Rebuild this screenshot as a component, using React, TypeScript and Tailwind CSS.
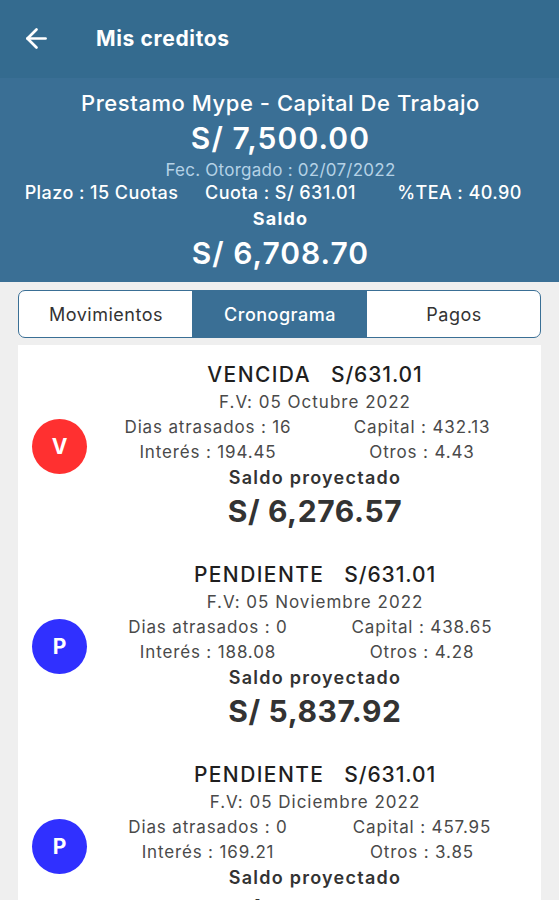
import { ArrowLeft } from "lucide-react";
import { clsx } from "clsx";

type Installment = {
  status: "VENCIDA" | "PENDIENTE";
  amount: string;
  dueDate: string;
  daysLate: string;
  capital: string;
  interest: string;
  others: string;
  balance: string;
};

const installments: Installment[] = [
  {
    status: "VENCIDA",
    amount: "S/631.01",
    dueDate: "05 Octubre 2022",
    daysLate: "16",
    capital: "432.13",
    interest: "194.45",
    others: "4.43",
    balance: "S/ 6,276.57",
  },
  {
    status: "PENDIENTE",
    amount: "S/631.01",
    dueDate: "05 Noviembre 2022",
    daysLate: "0",
    capital: "438.65",
    interest: "188.08",
    others: "4.28",
    balance: "S/ 5,837.92",
  },
  {
    status: "PENDIENTE",
    amount: "S/631.01",
    dueDate: "05 Diciembre 2022",
    daysLate: "0",
    capital: "457.95",
    interest: "169.21",
    others: "3.85",
    balance: "S/ 5,379.97",
  },
];

const tabs = ["Movimientos", "Cronograma", "Pagos"];
const activeTab = "Cronograma";

const Header = () => (
  <header className="flex h-[78px] items-center bg-[#346b8f] pl-[21px] text-white">
    <button type="button" aria-label="Volver" className="-mt-[2px]">
      <ArrowLeft className="h-[31px] w-[31px]" strokeWidth={2.1} />
    </button>
    <h1 className="ml-[44px] text-[21px] font-bold tracking-[0.65px]">
      Mis creditos
    </h1>
  </header>
);

const LoanSummary = () => (
  <section className="flex h-[204px] flex-col bg-[#3a6f95] pt-[10px] pl-[2px] text-center text-white">
    <p className="h-[30px] text-[22px] leading-[30px] font-medium tracking-[0.55px]">
      Prestamo Mype - Capital De Trabajo
    </p>
    <p className="h-[41px] text-[30px] leading-[41px] font-semibold tracking-[1.1px]">
      S/ 7,500.00
    </p>
    <p className="h-[22px] text-[17px] leading-[22px] tracking-[0.25px] text-[#b5d2e6]">
      Fec. Otorgado : 02/07/2022
    </p>
    <div className="grid h-[24px] grid-cols-3 px-[10px] text-[18px] leading-[24px] font-medium tracking-[0.43px] whitespace-nowrap">
      <p>Plazo : 15 Cuotas</p>
      <p>Cuota : S/ 631.01</p>
      <p>%TEA : 40.90</p>
    </div>
    <p className="h-[27px] text-[18px] leading-[27px] font-bold tracking-[1.2px]">
      Saldo
    </p>
    <p className="h-[42px] text-[30px] leading-[42px] font-semibold tracking-[1px]">
      S/ 6,708.70
    </p>
  </section>
);

const Tabs = () => (
  <nav className="mx-[18px] mt-[8px] grid h-[48px] grid-cols-[173px_175px_1fr] overflow-hidden rounded-[7px] border border-[#3a6f95] bg-white">
    {tabs.map((tab) => (
      <button
        key={tab}
        type="button"
        className={clsx(
          "pl-px text-[18px] tracking-[0.5px]",
          tab === activeTab
            ? "bg-[#3a6f95] font-medium text-white"
            : "text-[#333333]"
        )}
      >
        {tab}
      </button>
    ))}
  </nav>
);

const InstallmentRow = ({ item }: { item: Installment }) => (
  <li className="flex h-[200px] items-center pl-[14px]">
    <div
      className={clsx(
        "flex size-[55px] shrink-0 items-center justify-center rounded-full pt-[2px] text-[21px] font-bold text-white",
        item.status === "VENCIDA" ? "bg-[#ff3030]" : "bg-[#3030ff]"
      )}
    >
      {item.status[0]}
    </div>

    <div className="mt-[1px] ml-[14px] flex h-[171px] w-[428px] flex-col text-center text-[#4a4a4a]">
      <p className="flex justify-center gap-[20px] text-[21px] leading-[28px] font-medium text-[#1f1f1f]">
        <span className="tracking-[1.4px]">{item.status}</span>
        <span className="tracking-[0.9px]">{item.amount}</span>
      </p>
      <p className="text-[17px] leading-[26px] tracking-[1px]">
        F.V: {item.dueDate}
      </p>
      <div className="grid grid-cols-2 text-[17px] leading-[24.5px] tracking-[0.85px]">
        <p>Dias atrasados : {item.daysLate}</p>
        <p>Capital : {item.capital}</p>
        <p>Interés : {item.interest}</p>
        <p>Otros : {item.others}</p>
      </div>
      <p className="text-[18px] leading-[27px] font-semibold tracking-[1.25px] text-[#333333]">
        Saldo proyectado
      </p>
      <p className="text-[30px] leading-[41px] font-bold tracking-[0.6px] text-[#333333]">
        {item.balance}
      </p>
    </div>
  </li>
);

const App = () => {
  return (
    <main className="h-[900px] w-full overflow-hidden bg-[#efefef] font-['Inter','Noto_Sans',sans-serif]">
      <Header />
      <LoanSummary />
      <Tabs />
      <ul className="mx-[18px] mt-[7px] bg-white pt-[1px]">
        {installments.map((item) => (
          <InstallmentRow key={item.dueDate} item={item} />
        ))}
      </ul>
    </main>
  );
};

export default App;
